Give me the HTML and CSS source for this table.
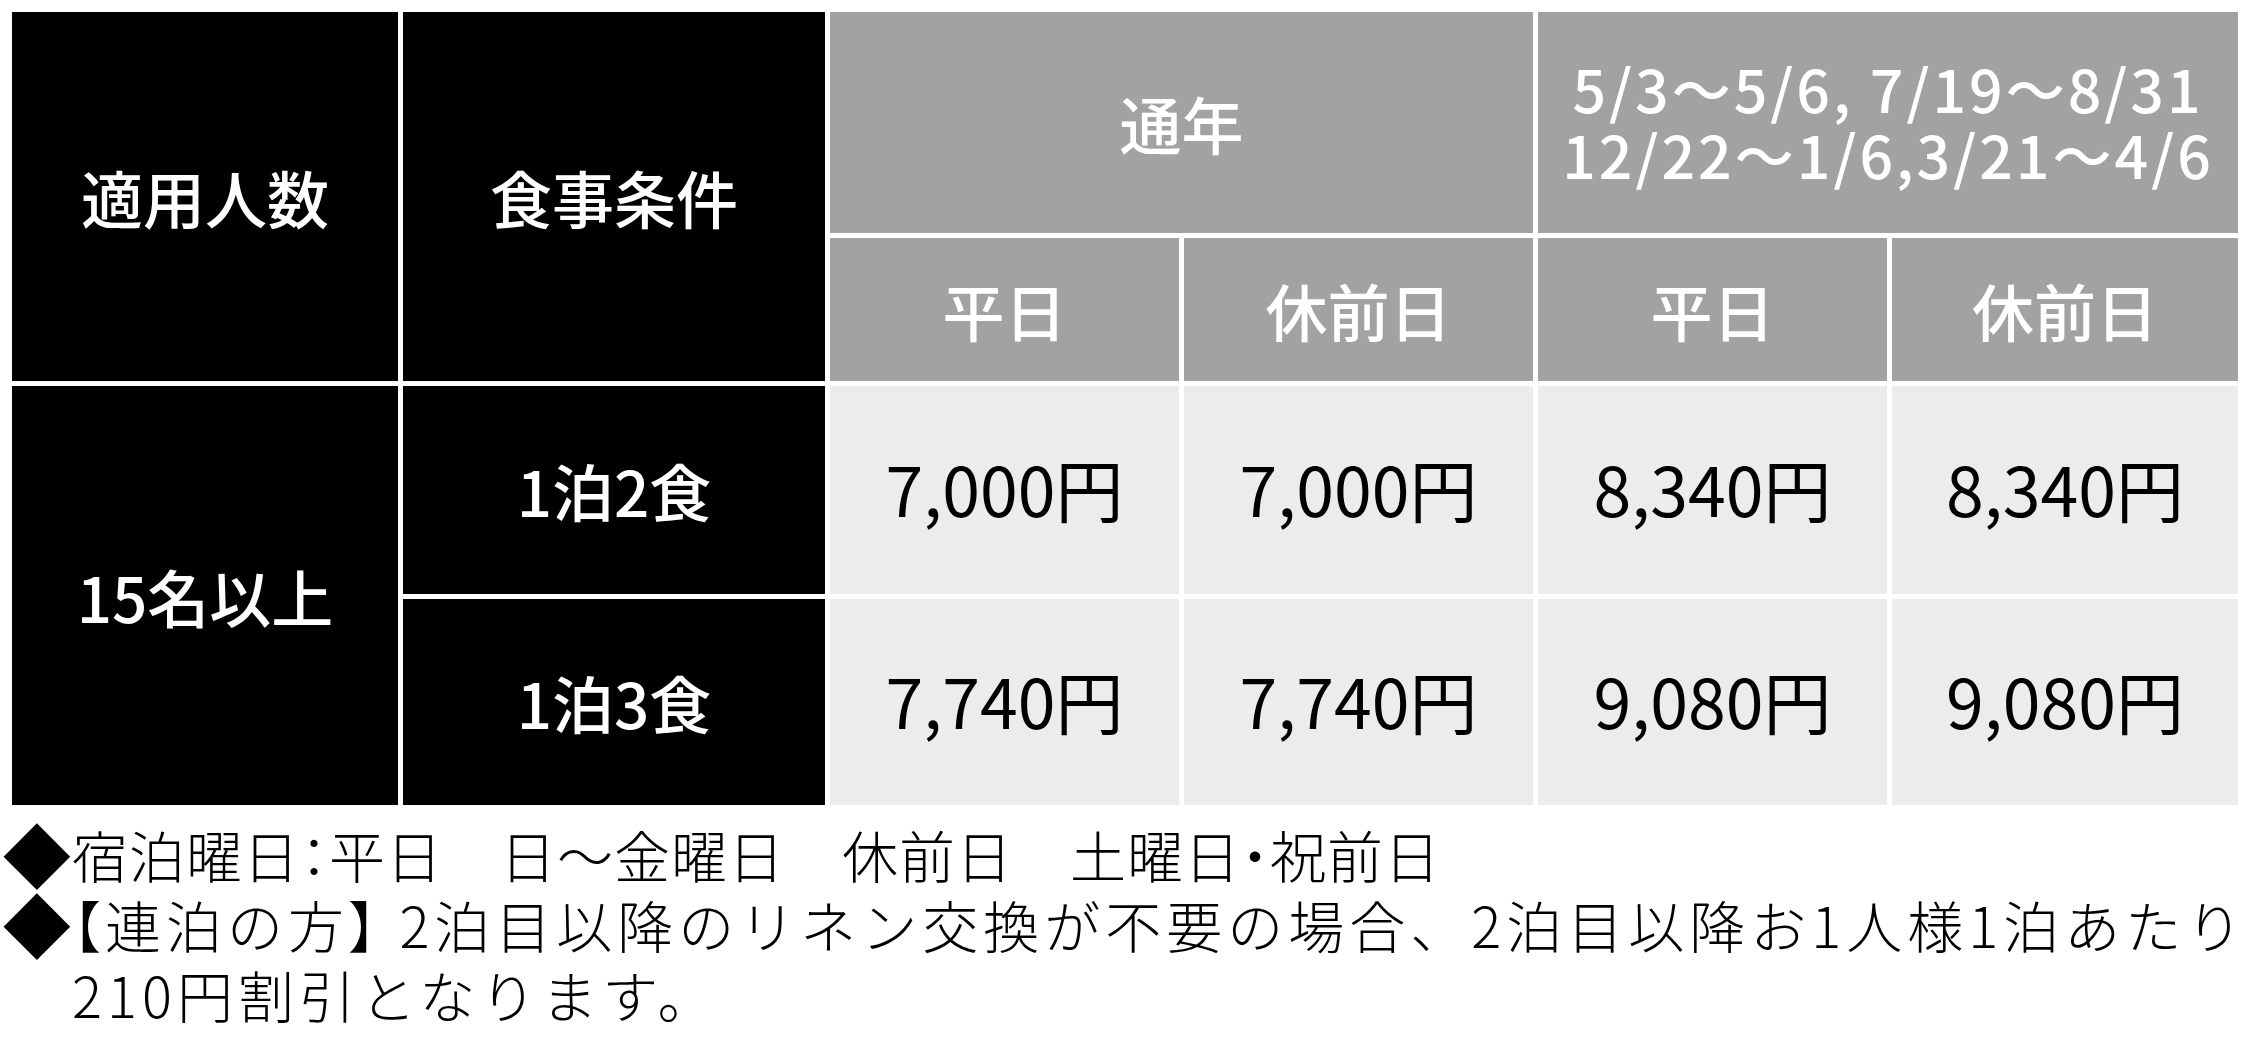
FILE: index.html
```html
<!DOCTYPE html>
<html lang="ja">
<head>
<meta charset="utf-8">
<title>料金表</title>
<link rel="stylesheet" href="styles.css">
</head>
<body>
<div class="page">
  <div class="rates">
    <div class="cell dark head c1 r12">適用人数</div>
    <div class="cell dark head c2 r12">食事条件</div>
    <div class="cell grey head c34 r1">通年</div>
    <div class="cell grey head c56 r1 dates">5/3～5/6, 7/19～8/31<br>12/22～1/6,3/21～4/6</div>
    <div class="cell grey head">平日</div>
    <div class="cell grey head">休前日</div>
    <div class="cell grey head">平日</div>
    <div class="cell grey head">休前日</div>

    <div class="cell dark head c1 r34">15名以上</div>
    <div class="cell dark head">1泊2食</div>
    <div class="cell light price">7,000円</div>
    <div class="cell light price">7,000円</div>
    <div class="cell light price">8,340円</div>
    <div class="cell light price">8,340円</div>

    <div class="cell dark head">1泊3食</div>
    <div class="cell light price">7,740円</div>
    <div class="cell light price">7,740円</div>
    <div class="cell light price">9,080円</div>
    <div class="cell light price">9,080円</div>
  </div>

  <div class="notes">
    <p class="note"><span class="mark"><span class="diamond">◆</span></span><span class="text">宿泊曜日<span class="p">：</span>平日　日～金曜日　休前日　土曜日<span class="p">・</span>祝前日</span></p>
    <p class="note wide"><span class="mark"><span class="diamond">◆</span></span><span class="text"><span class="p">【</span>連泊の方<span class="p">】</span> 2泊目以降のリネン交換が不要の場合、2泊目以降お1人様1泊あたり<br>210円割引となります。</span></p>
  </div>
</div>
</body>
</html>
```

FILE: styles.css
```css
html, body {
  margin: 0;
  padding: 0;
  background: #ffffff;
}

body {
  font-family: "Noto Sans CJK JP", "Noto Sans", sans-serif;
  color: #000000;
}

.page {
  padding: 12px 0 0 12px;
}

.rates {
  display: grid;
  grid-template-columns: 386px 422px 349px 349px 349px 346px;
  grid-template-rows: 221px 143px 208px 206px;
  gap: 5px;
}

.cell {
  display: flex;
  align-items: center;
  justify-content: center;
  text-align: center;
  white-space: nowrap;
}

.dark {
  background: #000000;
  color: #ffffff;
}

.grey {
  background: #a1a2a4;
  color: #ffffff;
}

.light {
  background: #ececec;
  color: #000000;
}

.head {
  font-size: 62px;
  font-weight: 500;
  line-height: 1;
}

.dates {
  font-size: 59px;
  line-height: 66px;
  font-weight: 500;
  letter-spacing: 3px;
  padding-bottom: 4px;
}

.price {
  font-size: 68px;
  font-weight: 400;
  line-height: 1;
  padding-bottom: 4px;
}

.c1 { grid-column: 1; }
.c2 { grid-column: 2; }
.c34 { grid-column: 3 / span 2; }
.c56 { grid-column: 5 / span 2; }
.r1 { grid-row: 1; }
.r12 { grid-row: 1 / span 2; }
.r34 { grid-row: 3 / span 2; }

.notes {
  margin: 14px 0 0 -8px;
}

.note {
  display: flex;
  margin: 0;
  font-size: 56px;
  line-height: 70px;
  font-weight: 300;
  white-space: nowrap;
}

.mark {
  flex: 0 0 68px;
  width: 68px;
}

.diamond {
  display: inline-block;
  transform: translateX(5px) scale(1.22);
}

.text {
  letter-spacing: 1px;
}

.wide .text {
  letter-spacing: 5px;
}

.p {
  font-feature-settings: "palt";
}
```
